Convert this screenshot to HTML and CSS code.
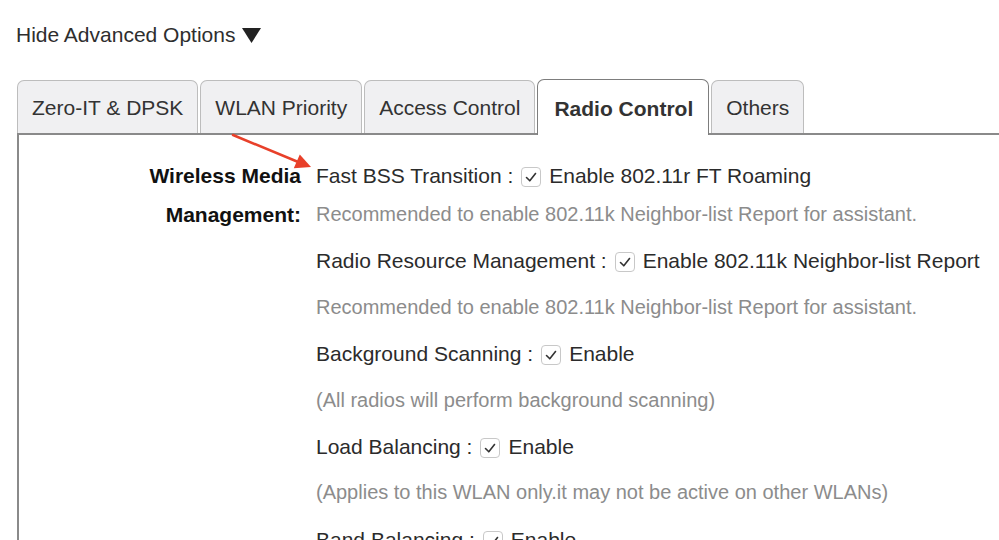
FILE: index.html
```html
<!DOCTYPE html>
<html lang="en">
<head>
    <meta charset="UTF-8">
    <meta name="viewport" content="width=device-width, initial-scale=1.0">
    <title>WLAN Advanced Options</title>
    <link rel="stylesheet" href="styles.css">
</head>
<body>
    <div class="toggle">Hide Advanced Options<svg class="caret" width="19" height="15" viewBox="0 0 19 15"><polygon points="0,0 19,0 9.5,15" fill="#222"/></svg></div>

    <div class="tabs">
        <div class="tab">Zero-IT &amp; DPSK</div>
        <div class="tab">WLAN Priority</div>
        <div class="tab">Access Control</div>
        <div class="tab active">Radio Control</div>
        <div class="tab">Others</div>
    </div>

    <div class="panel">
        <div class="field">
            <div class="field-label">Wireless Media<br>Management:</div>
            <div class="field-body">
                <div class="opt">Fast BSS Transition :<span class="check"><svg width="20" height="20" viewBox="0 0 20 20"><path d="M5.5 10.5 L8.8 13.8 L14.5 6.5" fill="none" stroke="#333" stroke-width="1.6" stroke-linecap="round" stroke-linejoin="round"/></svg></span>Enable 802.11r FT Roaming</div>
                <div class="opt hint tight">Recommended to enable 802.11k Neighbor-list Report for assistant.</div>
                <div class="opt">Radio Resource Management :<span class="check"><svg width="20" height="20" viewBox="0 0 20 20"><path d="M5.5 10.5 L8.8 13.8 L14.5 6.5" fill="none" stroke="#333" stroke-width="1.6" stroke-linecap="round" stroke-linejoin="round"/></svg></span>Enable 802.11k Neighbor-list Report</div>
                <div class="opt hint">Recommended to enable 802.11k Neighbor-list Report for assistant.</div>
                <div class="opt">Background Scanning :<span class="check"><svg width="20" height="20" viewBox="0 0 20 20"><path d="M5.5 10.5 L8.8 13.8 L14.5 6.5" fill="none" stroke="#333" stroke-width="1.6" stroke-linecap="round" stroke-linejoin="round"/></svg></span>Enable</div>
                <div class="opt hint">(All radios will perform background scanning)</div>
                <div class="opt">Load Balancing :<span class="check"><svg width="20" height="20" viewBox="0 0 20 20"><path d="M5.5 10.5 L8.8 13.8 L14.5 6.5" fill="none" stroke="#333" stroke-width="1.6" stroke-linecap="round" stroke-linejoin="round"/></svg></span>Enable</div>
                <div class="opt hint">(Applies to this WLAN only.it may not be active on other WLANs)</div>
                <div class="opt">Band Balancing :<span class="check"><svg width="20" height="20" viewBox="0 0 20 20"><path d="M5.5 10.5 L8.8 13.8 L14.5 6.5" fill="none" stroke="#333" stroke-width="1.6" stroke-linecap="round" stroke-linejoin="round"/></svg></span>Enable</div>
            </div>
        </div>
    </div>

    <!-- annotation arrow drawn over the page -->
    <svg class="arrow" width="999" height="540" viewBox="0 0 999 540">
        <line x1="233" y1="135" x2="297" y2="161.5" stroke="#e8402a" stroke-width="2.5" stroke-linecap="round"/>
        <polygon points="311,167 293.8,168.2 299.8,154.6" fill="#e8402a"/>
    </svg>
</body>
</html>
```

FILE: styles.css
```css
body {
    font-family: "Liberation Sans", Arial, sans-serif;
    font-size: 21px;
    color: #2e2e2e;
    background-color: #fff;
    margin: 0;
    padding: 0;
    overflow: hidden;
}

.toggle {
    padding: 23px 16px 0;
    line-height: 24px;
    height: 24px;
    color: #2e2e2e;
}
.caret {
    margin-left: 7px;
    vertical-align: -1px;
}

.tabs {
    display: flex;
    align-items: flex-end;
    gap: 2px;
    margin-top: 32px;
    padding-left: 17px;
    position: relative;
    z-index: 1;
}
.tab {
    height: 52px;
    line-height: 54px;
    padding: 0 14px;
    background-color: #f0f0f2;
    border: 1px solid #bdbdbd;
    border-bottom: none;
    border-radius: 7px 7px 0 0;
    color: #333;
}
.tab.active {
    height: 55px;
    line-height: 57px;
    margin-bottom: -2px;
    background-color: #fff;
    border: 1.5px solid #7d7d7d;
    border-bottom: none;
    font-weight: bold;
    padding: 0 15px 0 16px;
}

.panel {
    margin-left: 17px;
    border-top: 2px solid #8a8a8a;
    border-left: 2px solid #8a8a8a;
    padding-top: 21px;
    min-height: 500px;
}

.field {
    display: grid;
    grid-template-columns: 282px 1fr;
    column-gap: 15px;
}
.field-label {
    text-align: right;
    font-weight: bold;
    color: #111;
    line-height: 39px;
}
.field-body {
    white-space: nowrap;
}
.opt {
    line-height: 39px;
    color: #2b2b2b;
}
.opt + .opt {
    margin-top: 7.4px;
}
.opt.tight {
    margin-top: 0;
}
.hint {
    color: #8c8c8c;
    font-size: 20px;
}

.check {
    display: inline-block;
    width: 18px;
    height: 18px;
    border: 1px solid #c8c8c8;
    border-radius: 4px;
    margin: 0 8px 0 8px;
    vertical-align: -4px;
    background-color: #fff;
}
.check svg {
    display: block;
    margin: -1px;
}

.arrow {
    position: absolute;
    left: 0;
    top: 0;
    pointer-events: none;
    z-index: 5;
}
```
